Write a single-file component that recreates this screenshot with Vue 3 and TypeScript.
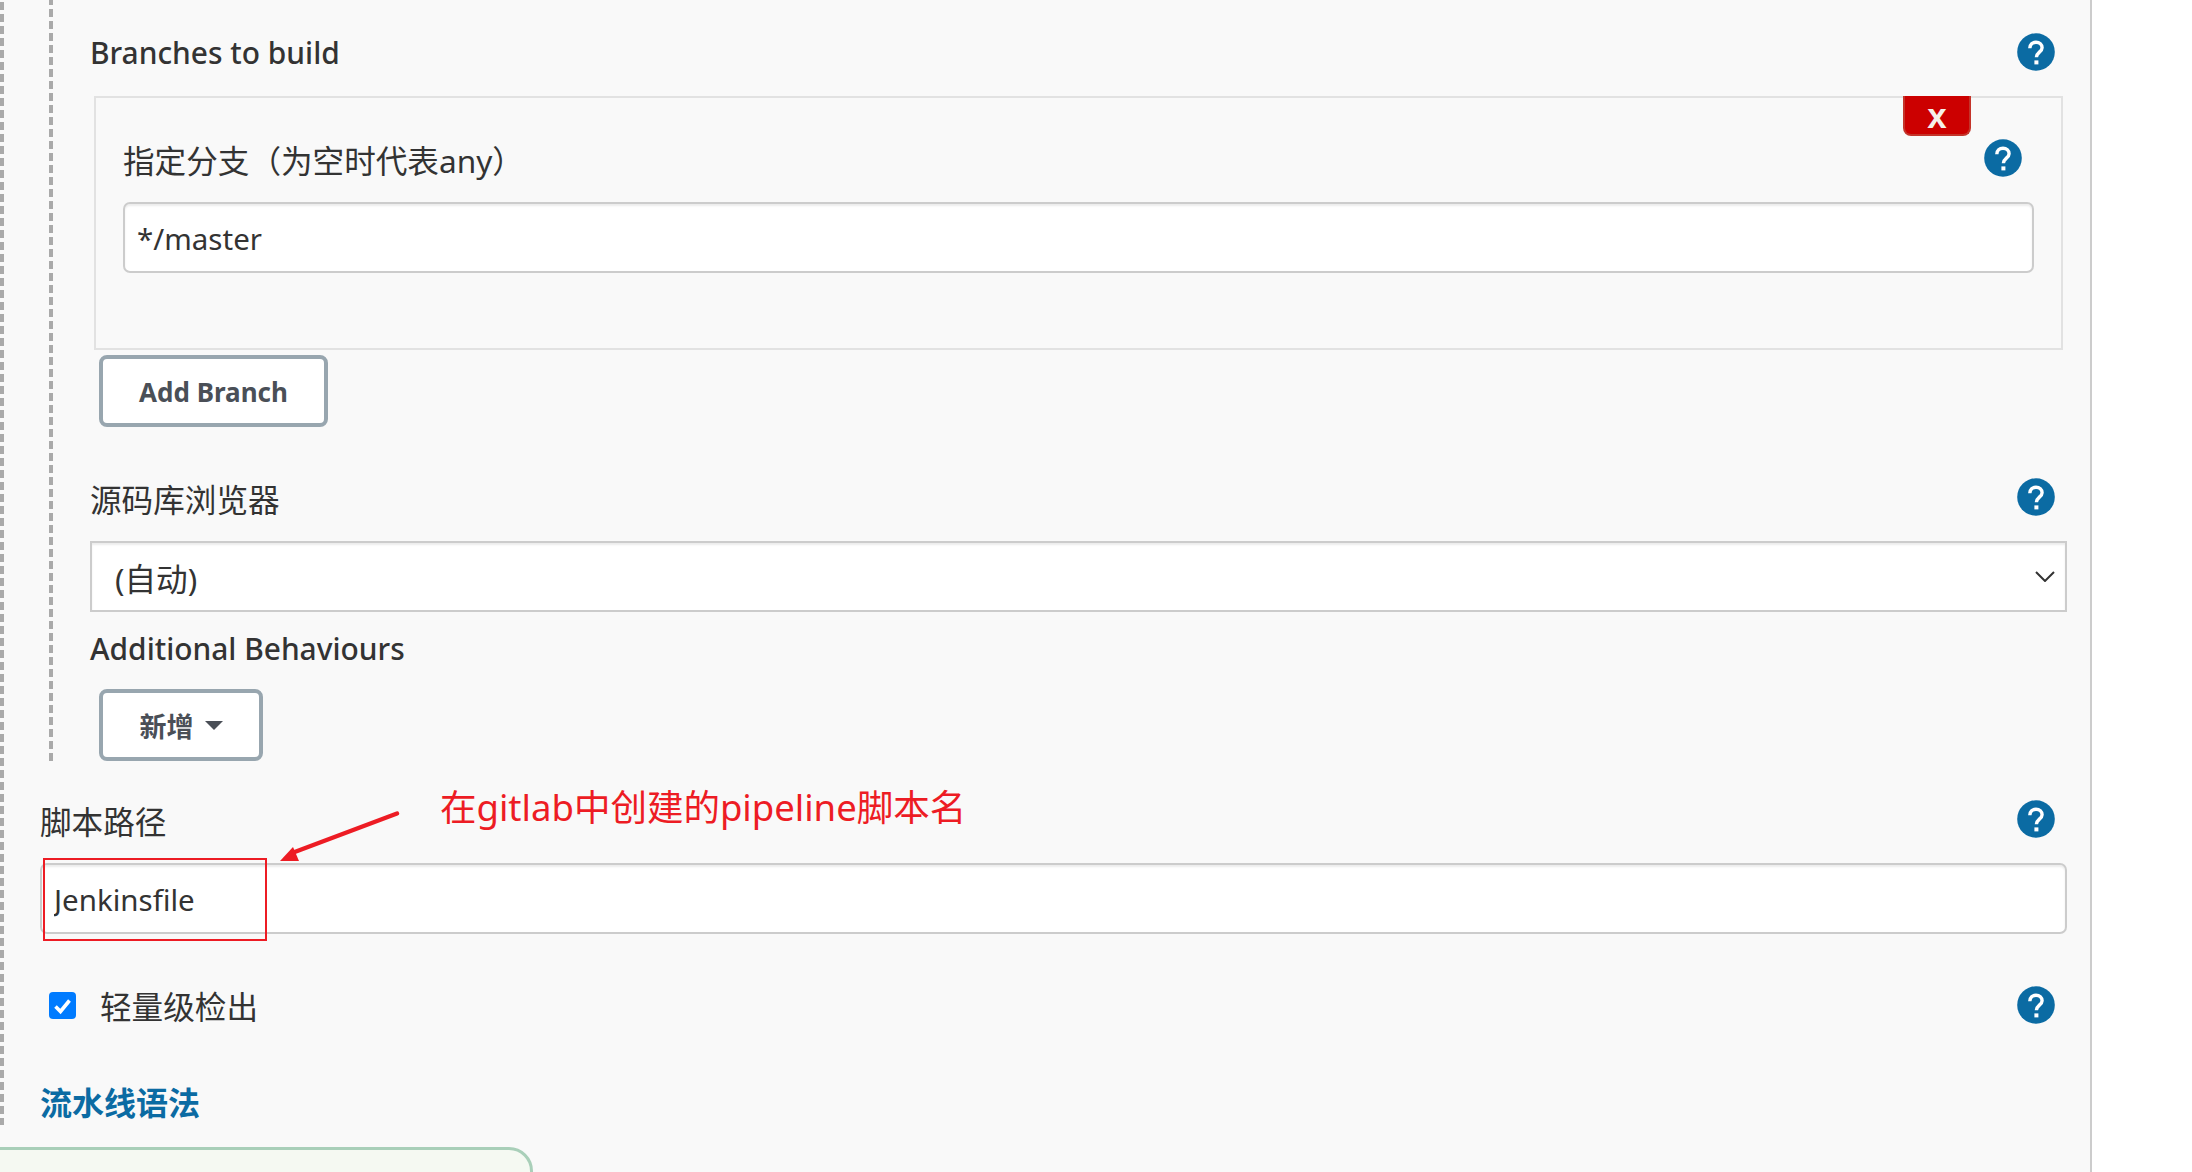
<script setup lang="ts">
import { ref } from 'vue';

const branch = ref('*/master');
const browser = ref('auto');
const scriptPath = ref('Jenkinsfile');
const lightweight = ref(true);
</script>

<template>
    <svg class="sprite" aria-hidden="true">
        <symbol id="help" viewBox="0 0 38 38">
            <circle cx="19" cy="19" r="18.8" fill="#0b6ba3" />
            <path d="M12.8 15.2C12.8 11.4 15.6 9.2 19 9.2c3.5 0 6.1 2.3 6.1 5.5 0 4.4-5.7 4.6-5.7 9.6" fill="none" stroke="#fff" stroke-width="3.4" />
            <rect x="17.4" y="27.4" width="4" height="4" fill="#fff" />
        </symbol>
    </svg>

    <div class="page">
        <div class="outer">
            <div class="inner">
                <div class="row first">
                    <span class="title">Branches to build</span>
                    <svg class="help"><use href="#help" /></svg>
                </div>

                <div class="branch-box">
                    <button class="remove">x</button>
                    <div class="row branch-row">
                        <span class="label">指定分支（为空时代表any）</span>
                        <svg class="help"><use href="#help" /></svg>
                    </div>
                    <input v-model="branch" class="text-input" type="text" />
                </div>

                <button class="btn add-branch">Add Branch</button>

                <div class="row browser-row">
                    <span class="label">源码库浏览器</span>
                    <svg class="help"><use href="#help" /></svg>
                </div>
                <div class="select-wrap">
                    <select v-model="browser" class="select">
                        <option value="auto">(自动)</option>
                    </select>
                    <svg class="chevron" viewBox="0 0 20 11"><path d="M1 1l9 9 9-9" fill="none" stroke="#333" stroke-width="2" /></svg>
                </div>

                <div class="title behaviours">Additional Behaviours</div>
                <button class="btn add-new">新增<span class="caret"></span></button>
            </div>

            <div class="row script-row">
                <span class="label">脚本路径</span>
                <svg class="help"><use href="#help" /></svg>
            </div>
            <div class="script-field">
                <input v-model="scriptPath" class="text-input" type="text" />
                <div class="red-box"></div>
            </div>

            <div class="row check-row">
                <label class="check">
                    <input v-model="lightweight" type="checkbox" />
                    <span class="check-box">
                        <svg viewBox="0 0 27 27"><path d="M6.5 14.5l5 5 9-11" fill="none" stroke="#fff" stroke-width="3.6" /></svg>
                    </span>
                    <span class="label">轻量级检出</span>
                </label>
                <svg class="help"><use href="#help" /></svg>
            </div>

            <a class="syntax">流水线语法</a>
        </div>

        <div class="green-box"></div>

        <!-- annotation drawn over the screenshot -->
        <span class="note">在gitlab中创建的pipeline脚本名</span>
        <svg class="arrow" width="130" height="60" viewBox="0 0 130 60">
            <path d="M117 2.5L12 42" fill="none" stroke="#ed1c24" stroke-width="4.4" stroke-linecap="round" />
            <path d="M0 50L13 36 19 50z" fill="#ed1c24" />
        </svg>
    </div>
</template>

<style scoped>
.sprite {
    display: none;
}

.page {
    position: relative;
    width: 2092px;
    height: 1172px;
    box-sizing: border-box;
    overflow: hidden;
    background: #f9f9f9;
    border-right: 2px solid #ccc;
    font-family: "Noto Sans", "Noto Sans CJK SC", sans-serif;
    color: #333;
}

.outer {
    box-sizing: border-box;
    height: 1125px;
    padding: 0 23px 0 40px;
    background: linear-gradient(#aaa 8px, transparent 8px) left 2px / 4px 12px repeat-y;
}

.inner {
    box-sizing: border-box;
    height: 761px;
    margin-left: 9px;
    padding: 33px 0 0 41px;
    background: linear-gradient(#aaa 8px, transparent 8px) left 9px / 4px 12px repeat-y;
}

.row {
    display: flex;
    justify-content: space-between;
    align-items: center;
    height: 38px;
    padding-right: 12px;
}

.help {
    flex: none;
    width: 38px;
    height: 38px;
}

.title {
    position: relative;
    top: 1px;
    font-size: 29.9px;
    font-weight: 500;
    line-height: 42px;
}

.label {
    font-size: 31.6px;
    line-height: 42px;
    position: relative;
    top: 3px;
}

.check .label {
    top: 2px;
}

.branch-box {
    position: relative;
    box-sizing: border-box;
    height: 254px;
    margin: 25px 4px 0 4px;
    padding: 41px 27px 0 27px;
    border: 2px solid #e2e2e2;
}

.remove {
    position: absolute;
    top: -2px;
    right: 90px;
    width: 68px;
    height: 40px;
    padding: 0 0 8px;
    border: 2px solid #c4342a;
    border-top: none;
    border-radius: 0 0 8px 8px;
    background: #cc0000;
    color: #f5f0ea;
    font-family: "Liberation Sans", sans-serif;
    font-size: 35px;
    font-weight: 700;
}

.text-input {
    display: block;
    box-sizing: border-box;
    width: 100%;
    height: 71px;
    margin-top: 25px;
    padding: 2px 12px 0;
    border: 2px solid #ccc;
    border-radius: 7px;
    background: #fff;
    box-shadow: inset 0 2px 2px rgba(0, 0, 0, 0.075);
    color: #333;
    font-family: inherit;
    font-size: 29.5px;
    outline: none;
}

.btn {
    display: block;
    box-sizing: border-box;
    height: 72px;
    margin: 0 0 0 9px;
    padding: 0;
    border: 4px solid #98a6af;
    border-radius: 8px;
    background: #fff;
    color: #4a4f57;
    font-family: inherit;
    font-size: 27px;
    font-weight: 700;
}

.add-branch {
    width: 229px;
    margin-top: 5px;
    padding-top: 2px;
    font-size: 26px;
}

.browser-row {
    margin-top: 51px;
}

.select-wrap {
    position: relative;
    margin-top: 25px;
}

.select {
    display: block;
    box-sizing: border-box;
    width: 100%;
    height: 71px;
    padding: 4px 23px 0;
    border: 2px solid #ccc;
    border-radius: 0;
    background: #fff;
    box-shadow: inset 0 2px 2px rgba(0, 0, 0, 0.075);
    appearance: none;
    color: #333;
    font-family: inherit;
    font-size: 31.6px;
    outline: none;
}

.chevron {
    position: absolute;
    top: 30px;
    right: 12px;
    width: 20px;
    height: 11px;
}

.behaviours {
    margin-top: 15px;
}

.add-new {
    display: flex;
    align-items: center;
    justify-content: center;
    width: 164px;
    margin-top: 20px;
}

.caret {
    width: 0;
    height: 0;
    margin-left: 11px;
    border-top: 9px solid #4a4f57;
    border-left: 9.5px solid transparent;
    border-right: 9.5px solid transparent;
}

.script-row {
    margin-top: 39px;
}

.script-field {
    position: relative;
}

.red-box {
    position: absolute;
    top: -5px;
    left: 3px;
    width: 224px;
    height: 83px;
    box-sizing: border-box;
    border: 2px solid #ed1c24;
    pointer-events: none;
}

.check-row {
    margin-top: 52px;
}

.check {
    display: flex;
    align-items: center;
    gap: 24px;
    margin-left: 9px;
}

.check input {
    display: none;
}

.check-box {
    display: block;
    width: 27px;
    height: 27px;
    border-radius: 4px;
    background: #007bff;
}

.check-box svg {
    display: block;
    width: 27px;
    height: 27px;
}

.syntax {
    display: block;
    margin-top: 58px;
    color: #0b6ba3;
    font-size: 32px;
    font-weight: 700;
    line-height: 42px;
}

.green-box {
    box-sizing: border-box;
    width: 563px;
    height: 80px;
    margin: 22px 0 0 -30px;
    border: 3px solid #a9cfb9;
    border-radius: 24px;
    background: #f5f9f2;
}

.note {
    position: absolute;
    top: 782px;
    left: 440px;
    color: #ed1c24;
    font-size: 36.5px;
    line-height: 50px;
    white-space: nowrap;
}

.arrow {
    position: absolute;
    top: 811px;
    left: 280px;
}
</style>

<style>
html, body {
    background: #fff;
}
</style>
